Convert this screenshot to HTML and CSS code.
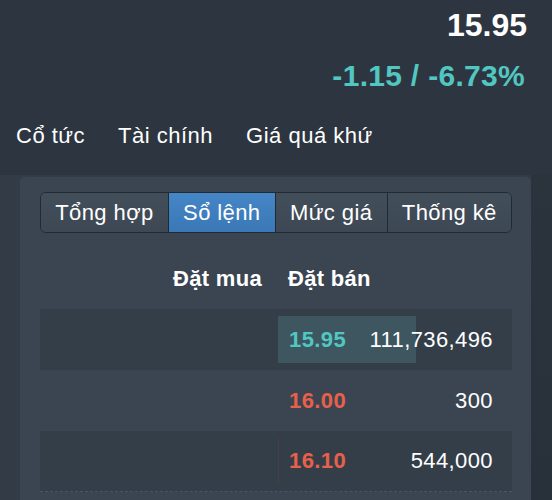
FILE: index.html
```html
<!DOCTYPE html>
<html lang="vi">
<head>
<meta charset="utf-8">
<title>Sổ lệnh</title>
<link rel="stylesheet" href="styles.css">
</head>
<body>
<header class="top">
  <div class="quote">
    <div class="price">15.95</div>
    <div class="change">-1.15 / -6.73%</div>
  </div>
  <nav class="links">
    <a class="link">Cổ tức</a>
    <a class="link">Tài chính</a>
    <a class="link">Giá quá khứ</a>
  </nav>
</header>
<main class="lower">
  <section class="panel">
    <div class="seg">
      <button class="seg-btn">Tổng hợp</button>
      <button class="seg-btn active">Sổ lệnh</button>
      <button class="seg-btn">Mức giá</button>
      <button class="seg-btn">Thống kê</button>
    </div>
    <div class="book-head">
      <div class="head-buy">Đặt mua</div>
      <div class="head-sell">Đặt bán</div>
    </div>
    <div class="row dark">
      <div class="buy"></div>
      <div class="sell">
        <div class="bar bar-teal" style="width:59%"></div>
        <span class="p up">15.95</span>
        <span class="v">111,736,496</span>
      </div>
    </div>
    <div class="row">
      <div class="buy"></div>
      <div class="sell">
        <span class="p down">16.00</span>
        <span class="v">300</span>
      </div>
    </div>
    <div class="row dark last">
      <div class="buy"></div>
      <div class="sell">
        <div class="bar bar-red" style="width:1px"></div>
        <span class="p down">16.10</span>
        <span class="v">544,000</span>
      </div>
    </div>
  </section>
  <aside class="side"></aside>
</main>
</body>
</html>
```
FILE: styles.css
```css
* { box-sizing: border-box; }
html, body {
  margin: 0;
  padding: 0;
  height: 100%;
}
body {
  background: #2d3640;
  color: #ffffff;
  font-family: "Liberation Sans", Arial, Helvetica, sans-serif;
  overflow: hidden;
}
.top {
  height: 175px;
  padding: 7px 25px 0 16px;
  background: #2d3640;
}
.quote {
  display: flex;
  flex-direction: column;
  align-items: flex-end;
}
.price {
  font-size: 32px;
  font-weight: bold;
  line-height: 36px;
}
.change {
  margin-top: 16px;
  font-size: 30px;
  font-weight: bold;
  line-height: 34px;
  color: #52c6c0;
  letter-spacing: 0.3px;
  margin-right: 2px;
}
.links {
  display: flex;
  gap: 33px;
  margin-top: 30px;
}
.link {
  font-size: 22px;
  line-height: 26px;
  letter-spacing: 0.5px;
  color: #ffffff;
}
.lower {
  display: flex;
  height: 325px;
  background: #333c46;
  padding-left: 20px;
}
.panel {
  width: 511px;
  margin-top: 2px;
  background: #3b4551;
  border-radius: 5px 5px 0 0;
  padding: 15px 19px 0 20px;
}
.side {
  flex: 1;
  background: linear-gradient(#2b333c, #283039);
}
.seg {
  display: flex;
  height: 41px;
  border: 1px solid #222a31;
  border-radius: 6px;
  overflow: hidden;
  background: #3f4a56;
}
.seg-btn {
  flex: 1 1 auto;
  padding: 0 12px;
  border: 0;
  border-left: 1px solid #222a31;
  background: linear-gradient(#434e5b, #3d4854);
  color: #ffffff;
  font-family: inherit;
  font-size: 22px;
  letter-spacing: 0.4px;
}
.seg-btn:first-child { border-left: 0; }
.seg-btn.active {
  background: linear-gradient(#4586c6, #3a78b6);
}
.book-head {
  display: grid;
  grid-template-columns: 238px 1fr;
  height: 76px;
  padding-top: 33px;
  font-size: 22px;
  line-height: 26px;
  font-weight: bold;
  letter-spacing: 0.3px;
}
.head-buy {
  text-align: right;
  padding-right: 16px;
}
.head-sell {
  padding-left: 10px;
}
.row {
  display: grid;
  grid-template-columns: 238px 1fr;
  height: 61px;
}
.row.dark { background: #343e49; }
.row.last { border-bottom: 1px dashed #4a5561; }
.sell {
  position: relative;
  display: flex;
  align-items: center;
  justify-content: space-between;
  padding: 0 19px 0 11px;
  font-size: 22px;
  letter-spacing: 0.4px;
}
.bar {
  position: absolute;
  left: 0;
  top: 7px;
  bottom: 7px;
}
.bar-teal { background: #3e5660; }
.bar-red { background: #4a3d44; }
.p {
  position: relative;
  font-weight: bold;
}
.v { position: relative; }
.up { color: #52c6c0; }
.down { color: #e8604a; }
```
